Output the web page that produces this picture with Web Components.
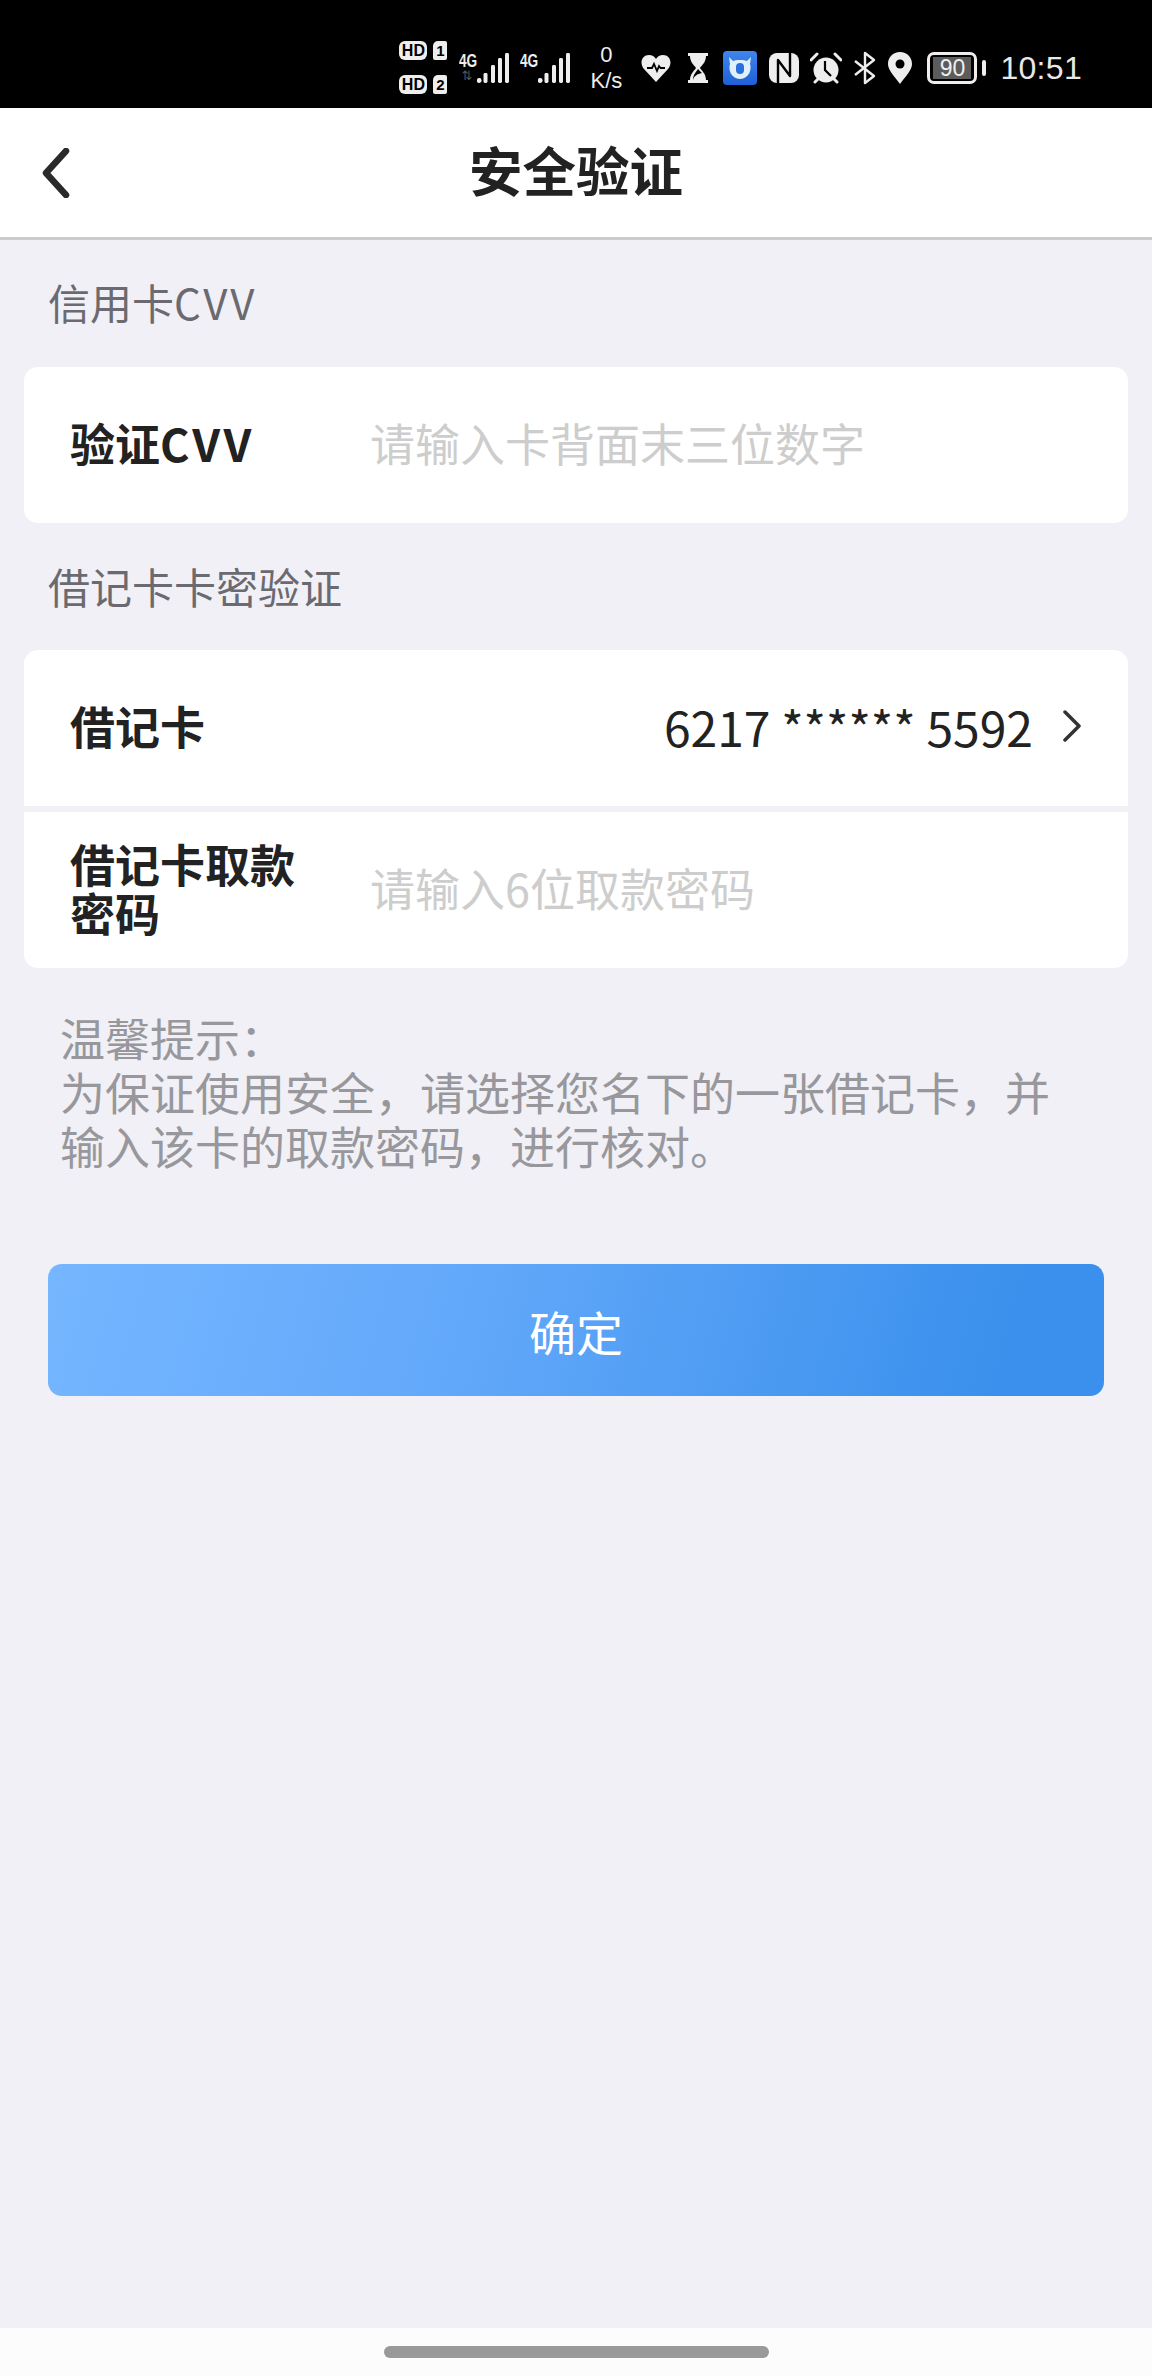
<!DOCTYPE html>
<html lang="zh">
<head>
<meta charset="utf-8">
<title>安全验证</title>
<style>
  html, body { margin: 0; padding: 0; }
  body {
    width: 1152px;
    height: 2376px;
    background: #f0f0f6;
    font-family: "Noto Sans CJK SC", "Noto Sans", sans-serif;
    display: flex;
    flex-direction: column;
    overflow: hidden;
  }
  main { flex: 1; display: flex; flex-direction: column; }
  .wide { letter-spacing: 2.5px; }
</style>
</head>
<body>
<status-bar></status-bar>
<nav-header>安全验证</nav-header>
<main>
  <section-label style="--top: 37px; --gap: 40px">信用卡<span class="wide">CVV</span></section-label>
  <form-card>
    <form-row label="验证<span style='letter-spacing:3px'>CVV</span>" placeholder="请输入卡背面末三位数字"></form-row>
  </form-card>
  <section-label style="--top: 38px; --gap: 39px">借记卡卡密验证</section-label>
  <form-card>
    <form-row label="借记卡" value="6217 ****** 5592"></form-row>
    <form-row label="借记卡取款密码" placeholder="请输入6位取款密码"></form-row>
  </form-card>
  <tip-text>
    温馨提示&#xFF1A;<br>为保证使用安全&#xFF0C;请选择您名下的一张借记卡&#xFF0C;并<br>输入该卡的取款密码&#xFF0C;进行核对。
  </tip-text>
  <submit-button>确定</submit-button>
</main>
<home-bar></home-bar>

<script>
  const svgIcon = (w, h, body) => `<svg width="${w}" height="${h}" viewBox="0 0 ${w} ${h}">${body}</svg>`

  // signal: one dot and four bars rising to the right
  const bars = () => {
    let out = '<circle cx="2.2" cy="27.5" r="2.4" fill="#eee"/>'
    const hs = [10, 18, 25, 30]
    const xs = [6.5, 14, 21, 28]
    hs.forEach((h, i) => {
      out += `<rect x="${xs[i]}" y="${30 - h}" width="4" height="${h}" rx="1.4" fill="#eee"/>`
    })
    return svgIcon(32, 30, out)
  }

  customElements.define('status-bar', class extends HTMLElement {
    constructor() {
      super()
      this.attachShadow({ mode: 'open' })
      this.shadowRoot.innerHTML = `
        <style>
          :host {
            display: flex;
            align-items: center;
            justify-content: flex-end;
            box-sizing: border-box;
            height: 108px;
            padding: 27px 70px 0 0;
            background: #000;
            color: #eee;
            font-family: "Liberation Sans", sans-serif;
          }
          svg { display: block; flex: none; }
          .sims { display: grid; grid-template-columns: 28px 14px; column-gap: 6px; row-gap: 15px; margin-right: 12px; }
          .hd {
            height: 19px; border-radius: 6px; background: #eee; color: #000;
            font: bold 16px/19px "Liberation Sans", sans-serif; text-align: center;
          }
          .num {
            height: 19px; border-radius: 5px 2px 2px 2px; background: #eee; color: #000;
            font: bold 15px/19px "Liberation Sans", sans-serif; text-align: center;
          }
          .signal { position: relative; width: 50px; height: 30px; display: flex; justify-content: flex-end; }
          .signal + .signal { margin-left: 11px; }
          .signal span {
            position: absolute; left: 0; top: -1px;
            font: bold 19px/18px "Liberation Sans", sans-serif;
            transform: scaleX(.72); transform-origin: left top;
          }
          .signal i {
            position: absolute; left: 2px; top: 16px;
            font: normal 13px/14px "DejaVu Sans", sans-serif; color: #555;
          }
          .speed { width: 34px; margin: 0 18px 0 19px; text-align: center; font-size: 22px; line-height: 26px; white-space: nowrap; }
          .speed b { display: block; font-weight: 400; }
          .batt {
            box-sizing: border-box; width: 50px; height: 32px; border: 3px solid #eee; border-radius: 7px;
            padding: 2px 3px; display: flex;
          }
          .batt span {
            flex: 1; background: #5c5c5c; color: #eee; text-align: center;
            font: 23px/22px "Liberation Sans", sans-serif;
          }
          .tip { width: 4px; height: 16px; background: #eee; border-radius: 2px; margin-left: 5px; }
          .time { margin-left: 14px; font-size: 32px; line-height: 36px; letter-spacing: .3px; color: #e8e8e8; }
        </style>
        <div class="sims">
          <div class="hd">HD</div><div class="num">1</div>
          <div class="hd">HD</div><div class="num">2</div>
        </div>
        <div class="signal"><span>4G</span><i>⇅</i>${bars()}</div>
        <div class="signal"><span>4G</span>${bars()}</div>
        <div class="speed"><b>0</b><b>K/s</b></div>
        ${svgIcon(30, 28, `<path d="M15 28 L3 15 C-2 9 1 1 8 1 C11 1 13.5 2.5 15 5 C16.5 2.5 19 1 22 1 C29 1 32 9 27 15 Z" fill="#eee"/><path d="M6 14 H11 L13 10 L16 17 L18 12 L19.5 14 H24" fill="none" stroke="#000" stroke-width="1.8"/>`)}
        <div style="width:16px"></div>
        ${svgIcon(22, 32, `<path d="M1 1 H21 V4 H19 C19 10 15 13 13 16 C15 19 19 22 19 28 H21 V31 H1 V28 H3 C3 22 7 19 9 16 C7 13 3 10 3 4 H1 Z" fill="#eee"/><path d="M6 28 C7 24 10 22 15 21 C13 19 12 18 11 17 C9 20 6 23 6 28 Z" fill="#000"/>`)}
        <div style="width:14px"></div>
        ${svgIcon(34, 34, `<defs><linearGradient id="b" x1="0" y1="0" x2="0" y2="1"><stop offset="0" stop-color="#3f86ec"/><stop offset="1" stop-color="#1f5fd8"/></linearGradient></defs><rect width="34" height="34" rx="4" fill="url(#b)"/><path d="M6 6 L10 10 C12 8.5 22 8.5 24 10 L28 6 L27 13 C29 18 26 28 17 28 C8 28 5 18 7 13 Z" fill="#dff0fb"/><rect x="13" y="12" width="8" height="11" rx="4" fill="#2a6fe0"/>`)}
        <div style="width:12px"></div>
        ${svgIcon(30, 30, `<rect width="30" height="30" rx="8" fill="#eee"/><path d="M9 30 V7 L21 23 V0" fill="none" stroke="#000" stroke-width="2.4" stroke-linejoin="round"/>`)}
        <div style="width:11px"></div>
        ${svgIcon(32, 32, `<circle cx="16" cy="18" r="12.5" fill="#eee"/><path d="M1 8 L7 2 M31 8 L25 2" stroke="#eee" stroke-width="3" stroke-linecap="round"/><path d="M5 30 L8 27 M27 30 L24 27" stroke="#eee" stroke-width="3" stroke-linecap="round"/><path d="M15 9 V18 L21 24" fill="none" stroke="#000" stroke-width="2.2"/>`)}
        <div style="width:11px"></div>
        ${svgIcon(24, 34, `<path d="M2 10 L21 25 L12 32 V2 L21 9 L2 24" fill="none" stroke="#eee" stroke-width="2.4" stroke-linejoin="round"/>`)}
        <div style="width:11px"></div>
        ${svgIcon(24, 32, `<path d="M12 32 C6 24 0 18 0 12 C0 5 5 0 12 0 C19 0 24 5 24 12 C24 18 18 24 12 32 Z" fill="#eee"/><circle cx="12" cy="12" r="4.5" fill="#000"/>`)}
        <div style="width:15px"></div>
        <div class="batt"><span>90</span></div>
        <div class="tip"></div>
        <div class="time">10:51</div>
      `
    }
  })

  customElements.define('nav-header', class extends HTMLElement {
    constructor() {
      super()
      this.attachShadow({ mode: 'open' })
      this.shadowRoot.innerHTML = `
        <style>
          :host {
            display: flex;
            align-items: center;
            justify-content: center;
            position: relative;
            box-sizing: content-box;
            height: 129px;
            background: #fff;
            border-bottom: 3px solid #cbcbcb;
            color: #222;
            font-size: 53.5px;
            font-weight: 700;
          }
          svg { position: absolute; left: 41px; top: 40px; }
          .title { margin-top: -8px; }
        </style>
        <svg width="30" height="50" viewBox="0 0 30 50">
          <path d="M25 3 L5 25 L25 47" fill="none" stroke="#2a2a2a" stroke-width="6.5" stroke-linecap="round" stroke-linejoin="round"/>
        </svg>
        <div class="title"><slot></slot></div>
      `
    }
  })

  customElements.define('section-label', class extends HTMLElement {
    constructor() {
      super()
      this.attachShadow({ mode: 'open' })
      this.shadowRoot.innerHTML = `
        <style>
          :host {
            display: block;
            padding: var(--top) 48px 0;
            height: 50px;
            margin-bottom: var(--gap);
            color: #6a6a70;
            font-size: 42px;
            line-height: 50px;
          }
        </style>
        <slot></slot>
      `
    }
  })

  customElements.define('form-card', class extends HTMLElement {
    constructor() {
      super()
      this.attachShadow({ mode: 'open' })
      this.shadowRoot.innerHTML = `
        <style>
          :host {
            display: flex;
            flex-direction: column;
            gap: 6px;
            margin: 0 24px;
            border-radius: 14px;
            overflow: hidden;
          }
        </style>
        <slot></slot>
      `
    }
  })

  customElements.define('form-row', class extends HTMLElement {
    constructor() {
      super()
      this.attachShadow({ mode: 'open' })
      const value = this.getAttribute('value')
      const ph = this.getAttribute('placeholder')
      const right = value
        ? `<div class="value">${value}</div>
           <svg width="20" height="32" viewBox="0 0 20 32"><path d="M3 2 L17 16 L3 30" fill="none" stroke="#333" stroke-width="3.5" stroke-linecap="round" stroke-linejoin="round"/></svg>`
        : `<div class="ph">${ph}</div>`
      this.shadowRoot.innerHTML = `
        <style>
          :host {
            display: flex;
            align-items: center;
            box-sizing: border-box;
            height: 156px;
            padding: 0 46px 5px 46px;
            background: #fff;
          }
          .label {
            flex: none;
            width: 230px;
            margin-right: 70px;
            color: #222;
            font-size: 45px;
            font-weight: 700;
            line-height: 49px;
          }
          .ph { color: #cdcdcd; font-size: 45px; }
          .value {
            flex: 1;
            text-align: right;
            color: #222;
            font-size: 48px;
            margin-right: 29px;
          }
          svg { flex: none; }
        </style>
        <div class="label">${this.getAttribute('label')}</div>
        ${right}
      `
    }
  })

  customElements.define('tip-text', class extends HTMLElement {
    constructor() {
      super()
      this.attachShadow({ mode: 'open' })
      this.shadowRoot.innerHTML = `
        <style>
          :host {
            display: block;
            padding: 43px 60px 0;
            color: #97979c;
            font-size: 45px;
            line-height: 54px;
          }
        </style>
        <slot></slot>
      `
    }
  })

  customElements.define('submit-button', class extends HTMLElement {
    constructor() {
      super()
      this.attachShadow({ mode: 'open' })
      this.shadowRoot.innerHTML = `
        <style>
          :host {
            display: flex;
            align-items: center;
            justify-content: center;
            height: 132px;
            margin: 91px 48px 0;
            border-radius: 14px;
            background: linear-gradient(105deg, #75b6ff 0%, #62a8fa 40%, #3a90ec 90%, #3a90ec 100%);
            color: #fff;
            font-size: 47px;
          }
        </style>
        <slot></slot>
      `
    }
  })

  customElements.define('home-bar', class extends HTMLElement {
    constructor() {
      super()
      this.attachShadow({ mode: 'open' })
      this.shadowRoot.innerHTML = `
        <style>
          :host {
            display: flex;
            justify-content: center;
            box-sizing: border-box;
            height: 48px;
            padding-top: 18px;
            background: #fcfcfc;
          }
          div { width: 385px; height: 12px; border-radius: 6px; background: #999; }
        </style>
        <div></div>
      `
    }
  })
</script>
</body>
</html>
